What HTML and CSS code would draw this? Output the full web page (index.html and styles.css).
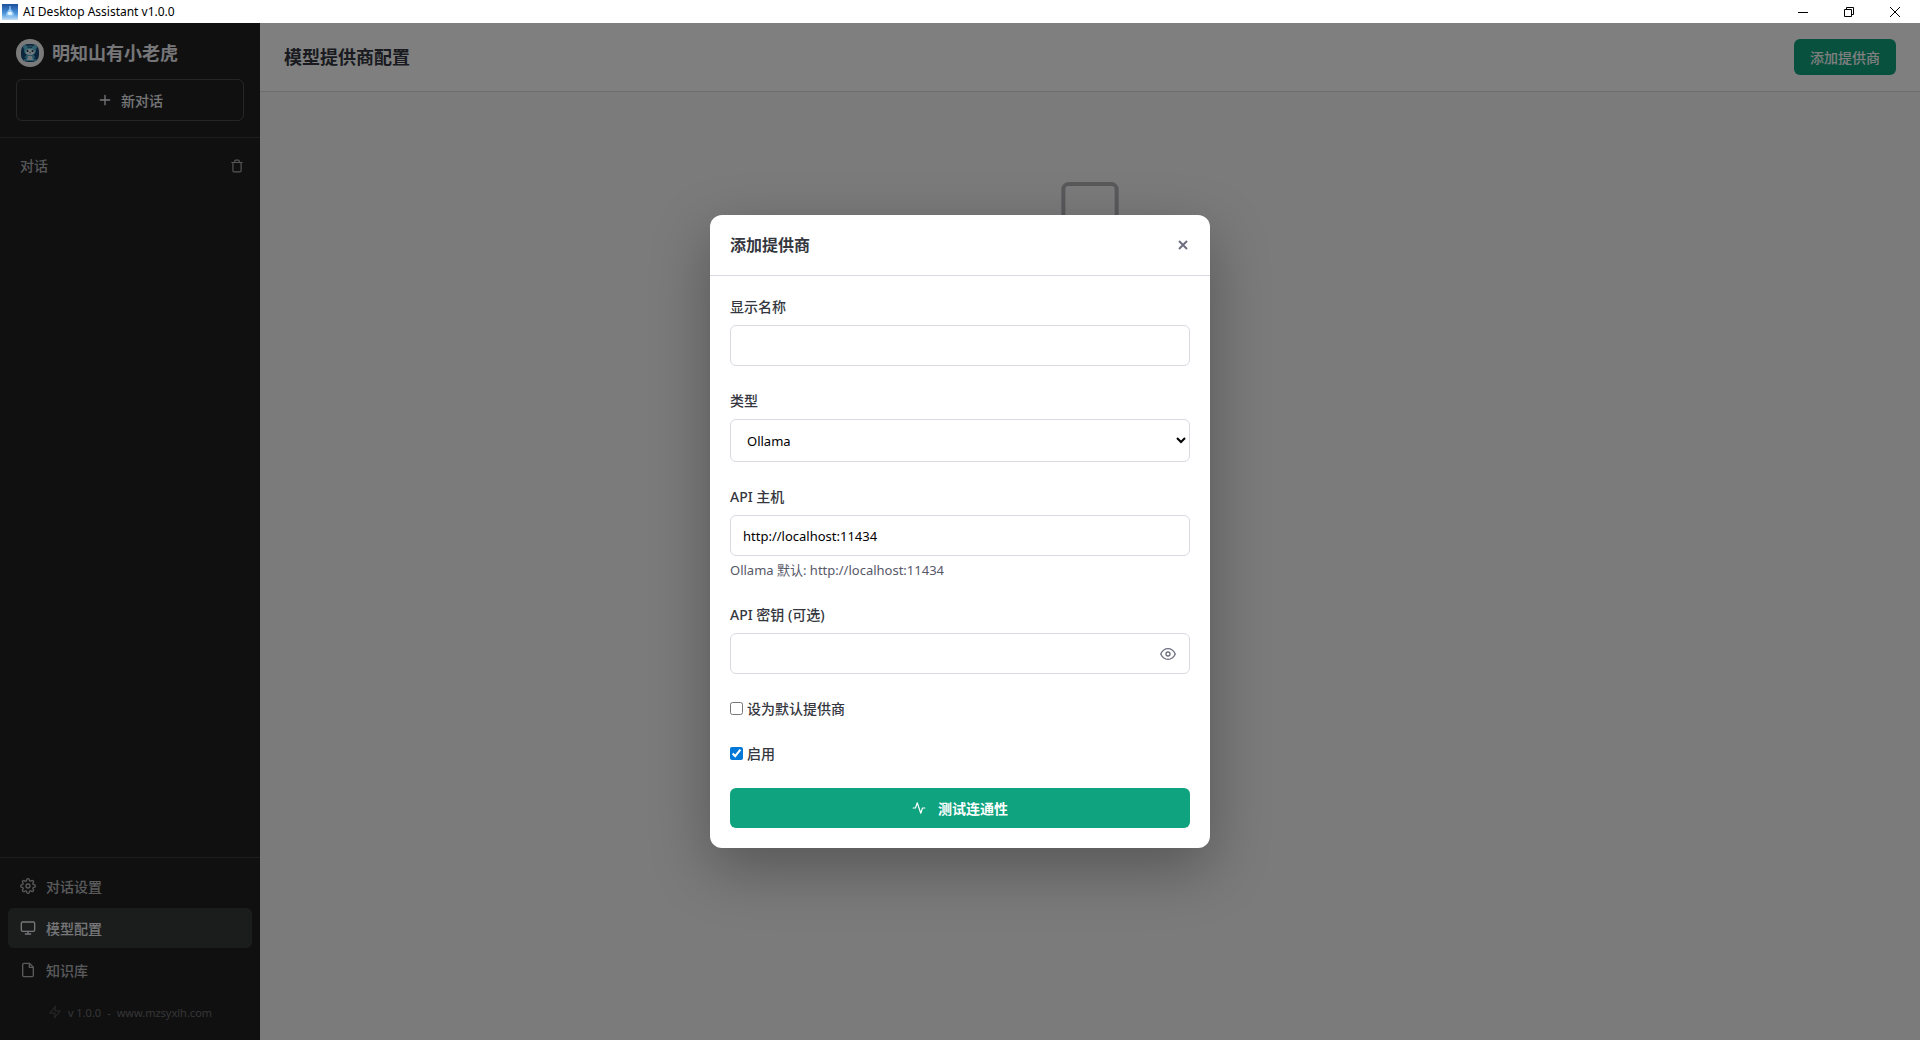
FILE: index.html
```html
<!DOCTYPE html>
<html lang="zh-CN">
<head>
    <meta charset="UTF-8">
    <title>AI Desktop Assistant</title>
    <link rel="stylesheet" href="styles.css">
</head>
<body>

<div class="titlebar">
    <svg class="titlebar-icon" viewBox="0 0 16 16">
        <defs>
            <linearGradient id="sky" x1="0" y1="0" x2="0" y2="1">
                <stop offset="0" stop-color="#1c4f9c"/>
                <stop offset="0.6" stop-color="#4f97dd"/>
                <stop offset="1" stop-color="#c4e0f6"/>
            </linearGradient>
        </defs>
        <rect width="16" height="16" fill="url(#sky)"/>
        <path d="M8 2v3" stroke="#a9dcff" stroke-width="1"/>
        <path d="M8 4l3 4c2 2 1 5-3 5s-5-3-3-5z" fill="#8cc6f5"/>
        <path d="M6 9c1-2 3-1 4 0s0 2-2 2-3-1-2-2z" fill="#e8f6ff"/>
    </svg>
    <span class="titlebar-text">AI Desktop Assistant v1.0.0</span>
    <div class="window-controls">
        <button type="button" aria-label="最小化"><svg viewBox="0 0 10 10"><path d="M0 5.5h10"/></svg></button>
        <button type="button" aria-label="还原"><svg viewBox="0 0 10 10"><path d="M.5 2.5h7v7h-7zM2.5 2.5v-2h7v7h-2"/></svg></button>
        <button type="button" aria-label="关闭"><svg viewBox="0 0 10 10"><path d="M0 0l10 10M10 0L0 10"/></svg></button>
    </div>
</div>

<div class="app">
    <aside class="sidebar">
        <div class="sidebar-header">
            <div class="brand">
                <svg class="avatar" viewBox="0 0 28 28">
                    <circle cx="14" cy="14" r="14" fill="#f4f4f4"/>
                    <rect x="5" y="5" width="18" height="18" rx="7" fill="#164a78"/>
                    <circle cx="9" cy="8" r="2" fill="#5fc0dc"/>
                    <circle cx="19" cy="8" r="2" fill="#5fc0dc"/>
                    <ellipse cx="14" cy="11.5" rx="6" ry="5" fill="#5fc0dc"/>
                    <ellipse cx="14" cy="13" rx="4.5" ry="3" fill="#e6f6fa"/>
                    <path d="M10 16h8l3 6H7z" fill="#4fa9cc"/>
                    <path d="M12 17h4l1 4h-6z" fill="#d4edf5"/>
                    <path d="M14 7v2M12 7.5l.5 1.500M16 7.500l-.5 1.500M8 20l2-1M20 20l-2-1" stroke="#123c63" stroke-width="1" fill="none"/>
                    <circle cx="11.5" cy="12" r="1" fill="#0c2b4a"/>
                    <circle cx="16.5" cy="12" r="1" fill="#0c2b4a"/>
                    <path d="M13 13.500h2l-1 1z" fill="#0c2b4a"/>
                </svg>
                <span class="brand-name">明知山有小老虎</span>
            </div>
            <button type="button" class="new-chat-btn">
                <svg class="icon" viewBox="0 0 24 24"><path d="M12 5v14M5 12h14"/></svg>
                新对话
            </button>
        </div>

        <div class="chat-list">
            <div class="chat-list-header">
                <span>对话</span>
                <button type="button" class="icon-btn" aria-label="清空对话">
                    <svg class="icon" viewBox="0 0 24 24"><path d="M3 6h18M19 6v14a2 2 0 0 1-2 2H7a2 2 0 0 1-2-2V6M8 6V4a2 2 0 0 1 2-2h4a2 2 0 0 1 2 2v2"/></svg>
                </button>
            </div>
        </div>

        <nav class="sidebar-footer">
            <a href="#" class="nav-item">
                <svg class="icon" viewBox="0 0 24 24"><circle cx="12" cy="12" r="3"/><path d="M19.4 15a1.65 1.65 0 0 0 .33 1.82l.06.06a2 2 0 0 1 0 2.83 2 2 0 0 1-2.83 0l-.06-.06a1.65 1.65 0 0 0-1.82-.33 1.65 1.65 0 0 0-1 1.51V21a2 2 0 0 1-2 2 2 2 0 0 1-2-2v-.09A1.65 1.65 0 0 0 9 19.4a1.65 1.65 0 0 0-1.82.33l-.06.06a2 2 0 0 1-2.83 0 2 2 0 0 1 0-2.83l.06-.06a1.65 1.65 0 0 0 .33-1.82 1.65 1.65 0 0 0-1.51-1H3a2 2 0 0 1-2-2 2 2 0 0 1 2-2h.09A1.65 1.65 0 0 0 4.6 9a1.65 1.65 0 0 0-.33-1.82l-.06-.06a2 2 0 0 1 0-2.83 2 2 0 0 1 2.83 0l.06.06a1.65 1.65 0 0 0 1.82.33H9a1.65 1.65 0 0 0 1-1.51V3a2 2 0 0 1 2-2 2 2 0 0 1 2 2v.09a1.65 1.65 0 0 0 1 1.51 1.65 1.65 0 0 0 1.82-.33l.06-.06a2 2 0 0 1 2.83 0 2 2 0 0 1 0 2.83l-.06.06a1.65 1.65 0 0 0-.33 1.82V9a1.65 1.65 0 0 0 1.51 1H21a2 2 0 0 1 2 2 2 2 0 0 1-2 2h-.09a1.65 1.65 0 0 0-1.51 1z"/></svg>
                对话设置
            </a>
            <a href="#" class="nav-item active">
                <svg class="icon" viewBox="0 0 24 24"><rect x="2" y="3" width="20" height="14" rx="2"/><path d="M8 21h8M12 17v4"/></svg>
                模型配置
            </a>
            <a href="#" class="nav-item">
                <svg class="icon" viewBox="0 0 24 24"><path d="M14 2H6a2 2 0 0 0-2 2v16a2 2 0 0 0 2 2h12a2 2 0 0 0 2-2V8z"/><path d="M14 2v6h6"/></svg>
                知识库
            </a>
            <div class="version">
                <svg class="icon" viewBox="0 0 24 24"><path d="M13 2L3 14h9l-1 8 10-12h-9l1-8z"/></svg>
                <span>v 1.0.0</span>
                <span>-</span>
                <a href="#">www.mzsyxlh.com</a>
            </div>
        </nav>
    </aside>

    <main class="main">
        <header class="main-header">
            <h1>模型提供商配置</h1>
            <button type="button" class="btn-primary">添加提供商</button>
        </header>
        <div class="empty-state">
            <svg viewBox="0 0 24 24"><rect x="2" y="3" width="20" height="14" rx="2"/><path d="M8 21h8M12 17v4"/></svg>
        </div>
    </main>

    <div class="overlay">
        <div class="modal" role="dialog" aria-labelledby="modalTitle">
            <div class="modal-header">
                <h2 id="modalTitle">添加提供商</h2>
                <button type="button" class="modal-close" aria-label="关闭">
                    <svg viewBox="0 0 10 10"><path d="M1 1l8 8M9 1L1 9"/></svg>
                </button>
            </div>
            <form class="modal-body">
                <div class="form-group">
                    <label for="displayName">显示名称</label>
                    <input type="text" id="displayName">
                </div>
                <div class="form-group">
                    <label for="type">类型</label>
                    <select id="type">
                        <option>Ollama</option>
                    </select>
                </div>
                <div class="form-group">
                    <label for="apiHost">API 主机</label>
                    <input type="text" id="apiHost" value="http://localhost:11434">
                    <small>Ollama 默认: http://localhost:11434</small>
                </div>
                <div class="form-group">
                    <label for="apiKey">API 密钥 (可选)</label>
                    <div class="password-wrap">
                        <input type="password" id="apiKey">
                        <button type="button" class="toggle-eye" aria-label="显示密钥">
                            <svg class="icon" viewBox="0 0 24 24"><path d="M1 12s4-8 11-8 11 8 11 8-4 8-11 8-11-8-11-8z"/><circle cx="12" cy="12" r="3"/></svg>
                        </button>
                    </div>
                </div>
                <div class="check-group">
                    <input type="checkbox" id="isDefault">
                    <label for="isDefault">设为默认提供商</label>
                </div>
                <div class="check-group">
                    <input type="checkbox" id="enabled" checked>
                    <label for="enabled">启用</label>
                </div>
                <button type="button" class="btn-primary btn-test">
                    <svg class="icon" viewBox="0 0 24 24"><path d="M22 12h-4l-3 9L9 3l-3 9H2"/></svg>
                    测试连通性
                </button>
            </form>
        </div>
    </div>
</div>

</body>
</html>
```

FILE: styles.css
```css
* {
    box-sizing: border-box;
    margin: 0;
    padding: 0;
}
body {
    display: flex;
    flex-direction: column;
    height: 100vh;
    overflow: hidden;
    font-family: "Noto Sans", "Noto Sans CJK SC", sans-serif;
    font-size: 14px;
    line-height: 21px;
    color: #353740;
}
button, input, select {
    font: inherit;
}
button {
    border: none;
    background: none;
}
a {
    color: inherit;
    text-decoration: none;
}
.icon {
    width: 16px;
    height: 16px;
    flex-shrink: 0;
    fill: none;
    stroke: currentColor;
    stroke-width: 2;
    stroke-linecap: round;
    stroke-linejoin: round;
}

/* window title bar */
.titlebar {
    display: flex;
    align-items: center;
    height: 23px;
    padding: 0 2px;
    background: #fff;
    color: #000;
}
.titlebar-icon {
    width: 16px;
    height: 16px;
    margin-right: 5px;
}
.titlebar-text {
    font-size: 12px;
}
.window-controls {
    display: flex;
    margin-left: auto;
}
.window-controls button {
    display: flex;
    align-items: center;
    justify-content: center;
    width: 46px;
    height: 20px;
}
.window-controls svg {
    width: 10px;
    height: 10px;
    fill: none;
    stroke: #000;
}

.app {
    position: relative;
    display: flex;
    flex: 1;
    min-height: 0;
}

/* sidebar */
.sidebar {
    display: flex;
    flex-direction: column;
    width: 260px;
    background: #202123;
    color: #ececf1;
}
.sidebar-header {
    padding: 16px;
    border-bottom: 1px solid #3c3d3f;
}
.brand {
    display: flex;
    align-items: center;
    gap: 8px;
    height: 28px;
    margin-bottom: 12px;
}
.avatar {
    width: 28px;
    height: 28px;
}
.brand-name {
    font-size: 18px;
    font-weight: 700;
}
.new-chat-btn {
    display: flex;
    align-items: center;
    justify-content: center;
    gap: 8px;
    width: 100%;
    height: 42px;
    border: 1px solid #4d4d4f;
    border-radius: 6px;
    color: #ececf1;
    font-weight: 500;
}
.chat-list {
    flex: 1;
    padding: 17px 16px;
}
.chat-list-header {
    display: flex;
    align-items: center;
    justify-content: space-between;
    padding-left: 4px;
    color: #acacae;
    font-weight: 500;
}
.icon-btn {
    display: flex;
    color: #acacae;
}
.icon-btn .icon {
    width: 14px;
    height: 14px;
}
.sidebar-footer {
    display: flex;
    flex-direction: column;
    gap: 2px;
    padding: 8px;
    border-top: 1px solid #3c3d3f;
}
.nav-item {
    display: flex;
    align-items: center;
    gap: 10px;
    height: 40px;
    padding: 0 12px;
    border-radius: 6px;
    color: #b4b4b6;
    font-weight: 500;
}
.nav-item.active {
    background: #373b3a;
    color: #ececf1;
}
.version {
    display: flex;
    align-items: center;
    justify-content: center;
    gap: 6px;
    height: 40px;
    color: #6c6c6e;
    font-size: 11px;
}
.version .icon {
    width: 14px;
    height: 14px;
    color: #4a4a4c;
}

/* main area */
.main {
    flex: 1;
    background: #f7f7f8;
}
.main-header {
    display: flex;
    align-items: center;
    justify-content: space-between;
    padding: 16px 24px;
    background: #fff;
    border-bottom: 1px solid #d9d9e3;
}
.main-header h1 {
    font-size: 18px;
    font-weight: 600;
}
.btn-primary {
    display: flex;
    align-items: center;
    justify-content: center;
    height: 36px;
    padding: 0 16px;
    border-radius: 6px;
    background: #10a37f;
    color: #fff;
    font-weight: 500;
}
.empty-state {
    display: flex;
    justify-content: center;
    padding: 84px 24px;
}
.empty-state svg {
    width: 64px;
    height: 64px;
    fill: none;
    stroke: #b2b2b8;
    stroke-width: 1.5;
}

/* add provider dialog */
.overlay {
    position: absolute;
    inset: 0;
    display: flex;
    align-items: center;
    justify-content: center;
    background: rgba(0, 0, 0, 0.5);
}
.modal {
    width: 500px;
    max-width: 90%;
    border-radius: 12px;
    background: #fff;
    box-shadow: 0 20px 60px rgba(0, 0, 0, 0.3);
}
.modal-header {
    display: flex;
    align-items: center;
    justify-content: space-between;
    height: 61px;
    padding: 0 20px;
    border-bottom: 1px solid #d9d9e3;
}
.modal-header h2 {
    font-size: 16px;
    font-weight: 600;
}
.modal-close {
    display: flex;
    padding: 2px;
}
.modal-close svg {
    width: 10px;
    height: 10px;
    fill: none;
    stroke: #6e6e80;
    stroke-width: 2;
}
.modal-body {
    display: flex;
    flex-direction: column;
    gap: 24px;
    padding: 20px;
}
.form-group {
    display: flex;
    flex-direction: column;
}
.form-group label {
    margin-bottom: 8px;
    font-weight: 500;
}
.form-group input,
.form-group select {
    width: 100%;
    height: 41px;
    padding: 0 12px;
    border: 1px solid #d9d9e3;
    border-radius: 6px;
    background: #fff;
    color: #000;
    font-size: 13px;
}
.form-group select {
    height: 43px;
}
.form-group small {
    margin-top: 4px;
    font-size: 13px;
    line-height: 20px;
    color: #565869;
}
.password-wrap {
    position: relative;
    display: flex;
}
.toggle-eye {
    position: absolute;
    top: 0;
    right: 14px;
    display: flex;
    align-items: center;
    height: 100%;
    color: #6e6e80;
}
.check-group {
    display: flex;
    align-items: center;
    gap: 4px;
    font-weight: 500;
}
.check-group input {
    width: 13px;
    height: 13px;
    accent-color: #0078d7;
}
.btn-test {
    gap: 12px;
    height: 40px;
    font-weight: 600;
}
.btn-test .icon {
    width: 14px;
    height: 14px;
}
```
